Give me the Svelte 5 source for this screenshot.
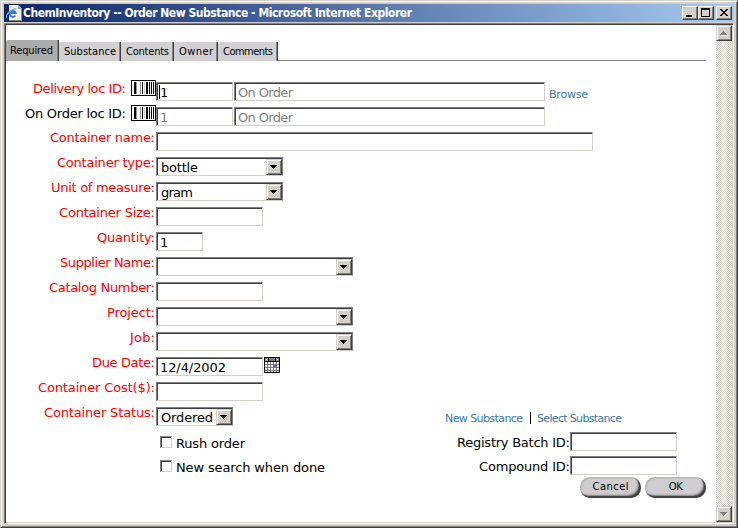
<script>
  // Tracks text out (or in) so that it fills the given width, like bitmap-hinted type.
  function fit(node, width) {
    const n = node.textContent.length;
    node.style.width = 'auto';
    const natural = node.getBoundingClientRect().width;
    if (n > 1) node.style.letterSpacing = (width - natural) / (n - 1) + 'px';
    node.style.width = width + 'px';
  }

  const tabs = [
    { name: 'Required', size: 'w53', text: 43 },
    { name: 'Substance', size: 'w62', text: 52 },
    { name: 'Contents', size: 'w53', text: 43 },
    { name: 'Owner', size: 'w44', text: 34 },
    { name: 'Comments', size: 'w60', text: 50 },
  ];

  const locations = [
    { label: 'Delivery loc ID:', text: 93, required: true },
    { label: 'On Order loc ID:', text: 101, required: false },
  ];

  const fields = [
    { label: 'Container name:', text: 105, kind: 'input', size: 'full' },
    { label: 'Container type:', text: 98, kind: 'select', size: 'mid', value: 'bottle', vw: 37 },
    { label: 'Unit of measure:', text: 104, kind: 'select', size: 'mid', value: 'gram', vw: 32 },
    { label: 'Container Size:', text: 96, kind: 'input', size: 'std' },
    { label: 'Quantity:', text: 58, kind: 'input', size: 'small', value: '1', vw: 8 },
    { label: 'Supplier Name:', text: 95, kind: 'select', size: 'wide' },
    { label: 'Catalog Number:', text: 106, kind: 'input', size: 'std' },
    { label: 'Project:', text: 48, kind: 'select', size: 'wide' },
    { label: 'Job:', text: 25, kind: 'select', size: 'wide' },
    { label: 'Due Date:', text: 63, kind: 'input', size: 'std', value: '12/4/2002', vw: 66, calendar: true },
    { label: 'Container Cost($):', text: 117, kind: 'input', size: 'std' },
    { label: 'Container Status:', text: 111, kind: 'select', size: 'loc', value: 'Ordered', vw: 52, links: true },
  ];

  const extras = [
    { check: 'Rush order', cw: 69, label: 'Registry Batch ID:', text: 113 },
    { check: 'New search when done', cw: 149, label: 'Compound ID:', text: 91 },
  ];
</script>

{#snippet barcode()}
  <svg class="barcode" width="25" height="16" shape-rendering="crispEdges">
    <rect width="25" height="16" fill="#000" />
    <rect x="1" y="1" width="23" height="14" fill="#fff" />
    <path d="M3 2h2v12h-2zM11 2h1v12h-1zM15 2h2v12h-2zM18 2h1v12h-1zM20 2h1v12h-1zM22 2h1v12h-1z" fill="#000" />
    <path d="M5 2h1v12h-1zM9 2h1v12h-1z" fill="#999" />
    <path d="M13 2h1v12h-1z" fill="#ccc" />
  </svg>
{/snippet}

<div class="window">
  <header class="titlebar">
    <svg class="logo" width="16" height="16" viewBox="0 0 16 16">
      <path d="M3 0h9l4 4v12H3z" fill="#f4f2ea" />
      <path d="M12 0v4h4z" fill="#aaa79d" />
      <path d="M15.5 4v11.5H3" fill="none" stroke="#88877f" />
      <path d="M9.3 10.6a3 3 0 1 1 .4-2.6H4" fill="none" stroke="#2878d0" stroke-width="1.8" />
      <path d="M1 13C-1 10 6 3 10.5 4" fill="none" stroke="#5aaeee" stroke-width="1.2" />
    </svg>
    <span class="title" use:fit={389}>ChemInventory -- Order New Substance - Microsoft Internet Explorer</span>
    <div class="controls">
      <div class="btn"><svg width="12" height="10" shape-rendering="crispEdges"><path d="M2 7h6v2H2z" /></svg></div>
      <div class="btn"><svg width="12" height="10" shape-rendering="crispEdges"><path d="M1 0h9v9H1zM2 2v6h7V2z" fill-rule="evenodd" /></svg></div>
      <div class="btn close"><svg width="12" height="10" shape-rendering="crispEdges"><path d="M2 1h2v1h1v1h2V2h1V1h2v1H9v1H8v1H7v1h1v1h1v1h1v1H8V7H7V6H5v1H4v1H2V7h1V6h1V5h1V4H4V3H3V2H2z" /></svg></div>
    </div>
  </header>

  <div class="view">
    <main>
      <nav>
        {#each tabs as tab, i}
          <div class="tab {tab.size}" class:active={i === 0}><span use:fit={tab.text}>{tab.name}</span></div>
        {/each}
        <div class="rule"></div>
      </nav>

      <div class="form">
        {#each locations as loc, i}
          <div class="row">
            <div class="label located" class:required={loc.required}><span use:fit={loc.text}>{loc.label}</span></div>
            {@render barcode()}
            <div class="field loc" class:disabled={i === 1}>{#if i === 0}<i class="caret"></i>{/if}<span>1</span></div>
            <div class="field place disabled"><span use:fit={55}>On Order</span></div>
            {#if i === 0}<a class="browse" href="#browse"><span use:fit={39}>Browse</span></a>{/if}
          </div>
        {/each}

        {#each fields as f}
          <div class="row">
            <div class="label required"><span use:fit={f.text}>{f.label}</span></div>
            <div class="field {f.size} {f.kind}">
              {#if f.value}<span use:fit={f.vw}>{f.value}</span>{/if}
              {#if f.kind === 'select'}
                <div class="drop"><svg width="7" height="4" shape-rendering="crispEdges"><path d="M0 0h7v1H6v1H5v1H4v1H3V3H2V2H1V1H0z" /></svg></div>
              {/if}
            </div>
            {#if f.calendar}
              <svg class="calendar" width="16" height="16" shape-rendering="crispEdges">
                <rect width="16" height="16" fill="#000" />
                <rect x="1" y="1" width="3" height="3" fill="#999" />
                <rect x="5" y="1" width="6" height="3" fill="#808080" />
                <rect x="12" y="1" width="3" height="3" fill="#999" />
                <path d="M2 2h1v1H2zM13 2h1v1h-1z" fill="#fff" />
                <rect x="1" y="5" width="14" height="10" fill="#777" />
                {#each [5, 8, 11, 14] as y}
                  {#each [1, 4, 7, 10, 13] as x}
                    <rect {x} {y} width="2" height={y === 14 ? 1 : 2} fill="#fff" />
                  {/each}
                {/each}
                <path d="M10 8h2v2h-2z" fill="#5555ff" />
              </svg>
            {/if}
            {#if f.links}
              <div class="links">
                <a href="#new"><span use:fit={78}>New Substance</span></a>
                <i></i>
                <a href="#select"><span use:fit={85}>Select Substance</span></a>
              </div>
            {/if}
          </div>
        {/each}

        {#each extras as e}
          <div class="extra">
            <div class="check"></div>
            <div class="caption"><span use:fit={e.cw}>{e.check}</span></div>
            <div class="side"><span use:fit={e.text}>{e.label}</span></div>
            <div class="field std"></div>
          </div>
        {/each}
      </div>

      <footer>
        <div class="pill"><span use:fit={36}>Cancel</span></div>
        <div class="pill"><span use:fit={14}>OK</span></div>
      </footer>
    </main>

    <aside>
      <div class="arrow"><svg width="8" height="5" shape-rendering="crispEdges"><path d="M1 4h7v1H1z" fill="#fff" /><path d="M3 0h1v1h1v1h1v1h1v1H0V3h1V2h1V1h1z" fill="#808080" /></svg></div>
      <div class="arrow"><svg width="8" height="5" shape-rendering="crispEdges"><path d="M1 1h7v1H7v1H6v1H5v1H4z" fill="#fff" /><path d="M0 0h7v1H6v1H5v1H4v1H3V3H2V2H1V1H0z" fill="#808080" /></svg></div>
    </aside>
  </div>
</div>

<style>
  .window, .window * { box-sizing: border-box; }
  .window {
    width: 738px;
    height: 528px;
    border: 1px solid;
    border-color: #d4d0c8 #404040 #404040 #d4d0c8;
    box-shadow: inset 1px 1px #fff, inset -1px -1px #808080;
    background: #d4d0c8;
    font: 13px/15px "DejaVu Sans", Verdana, sans-serif;
    color: #000;
    padding: 3px;
    display: flex;
    flex-direction: column;
    overflow: hidden;
  }
  span { display: inline-block; white-space: nowrap; }
  svg { display: block; flex: none; }
  a { color: #3779b0; text-decoration: none; font-size: 11px; line-height: 13px; }

  .titlebar {
    height: 18px;
    flex: none;
    display: flex;
    align-items: center;
    padding: 0 2px;
    background: linear-gradient(90deg, #0a246a, #a6caf0);
    color: #fff;
  }
  .title { margin-left: 1px; font: bold 12px/18px "DejaVu Sans Condensed", "DejaVu Sans", sans-serif; font-stretch: condensed; }
  .controls { margin-left: auto; display: flex; }
  .btn {
    width: 16px;
    height: 14px;
    border: 1px solid;
    border-color: #fff #404040 #404040 #fff;
    box-shadow: inset -1px -1px #808080;
    background: #d4d0c8;
    padding: 1px;
  }
  .close { margin-left: 2px; }

  .view {
    height: 501px;
    margin-top: 1px;
    border: 1px solid;
    border-color: #808080 #fff #fff #808080;
    display: flex;
    box-shadow: inset 1px 1px #404040, inset -1px -1px #d4d0c8;
    padding: 1px;
    background: #fff;
  }
  main { flex: 1; background: #fff; min-width: 0; }

  nav { display: flex; align-items: flex-end; height: 36px; padding-right: 10px; font: 11px/13px "DejaVu Sans Condensed", "DejaVu Sans", sans-serif; font-stretch: condensed; }
  .tab {
    height: 19px;
    background: #d2d0d3;
    border-right: 1px solid #404040;
    box-shadow: inset -1px 0 #858585;
    border-top-left-radius: 2px;
    padding: 3px 0 0 5px;
  }
  .active { height: 21px; background: #acacac; padding: 4px 0 0 4px; }
  .w53 { width: 53px; }
  .w62 { width: 62px; }
  .w44 { width: 44px; }
  .w60 { width: 60px; }
  .rule { flex: 1; height: 1px; background: #858585; }

  .form { padding-top: 19px; }
  .row { height: 25px; display: flex; align-items: flex-start; }
  .label { width: 150px; flex: none; padding-right: 1px; display: flex; justify-content: flex-end; }
  .located { width: 125px; padding: 1px 5px 0 0; }
  .required { color: #f00; }

  .field {
    height: 19px;
    margin-top: 2px;
    flex: none;
    border: 1px solid;
    border-color: #808080 #d4d0c8 #d4d0c8 #808080;
    box-shadow: inset 1px 1px #404040;
    background: #fff;
    padding: 2px 1px 0 3px;
    display: flex;
  }
  .disabled { color: #808080; }
  .caret { width: 1px; height: 14px; margin-left: -1px; background: #000; }
  .loc { width: 77px; }
  .place { width: 311px; margin-left: 1px; }
  .full { width: 437px; }
  .mid { width: 127px; }
  .std { width: 107px; }
  .small { width: 47px; }
  .wide { width: 197px; }
  .select { padding: 1px 0 0 4px; border-right-color: #808080; }
  .select > span { padding-top: 1px; }
  .drop {
    margin-left: auto;
    width: 16px;
    height: 16px;
    background: #d4d0c8;
    border: 1px solid;
    border-color: #d4d0c8 #404040 #404040 #d4d0c8;
    box-shadow: inset 1px 1px #fff, inset -1px -1px #808080;
    padding: 5px 0 0 3px;
  }
  .browse { margin: 8px 0 0 4px; }
  .calendar { margin: 2px 0 0 1px; }
  .links { display: flex; margin: 7px 0 0 212px; }
  .links i { width: 1px; height: 12px; background: #000; margin: 0 6px 0 7px; }

  .extra { height: 24px; display: flex; align-items: flex-start; }
  .check {
    width: 12px;
    height: 12px;
    margin: 6px 0 0 154px;
    border: 1px solid;
    border-color: #808080 #d4d0c8 #d4d0c8 #808080;
    box-shadow: inset 1px 1px #404040;
  }
  .caption { margin: 6px 0 0 4px; }
  .side { margin-top: 5px; margin-left: auto; }
  .extra > .field { margin: 2px 39px 0 0; }

  footer { display: flex; justify-content: flex-end; gap: 4px; padding-right: 10px; margin-top: -1px; }
  .pill {
    width: 61px;
    height: 21px;
    border-radius: 11px;
    background: #cfcdd0;
    box-shadow: inset -2px -2px 1px #404040, inset -3px -3px 2px #888, inset 1px 1px 2px #aaa;
    font-size: 10px;
    line-height: 12px;
    text-align: center;
    padding-top: 4px;
  }

  aside {
    width: 16px;
    display: flex;
    flex-direction: column;
    justify-content: space-between;
    background: repeating-conic-gradient(#d4d0c8 0 25%, #fff 0 50%) 0 0 / 2px 2px;
  }
  .arrow {
    width: 16px;
    height: 16px;
    background: #d4d0c8;
    border: 1px solid;
    border-color: #d4d0c8 #404040 #404040 #d4d0c8;
    box-shadow: inset 1px 1px #fff, inset -1px -1px #808080;
    padding: 5px 0 0 3px;
  }
</style>
